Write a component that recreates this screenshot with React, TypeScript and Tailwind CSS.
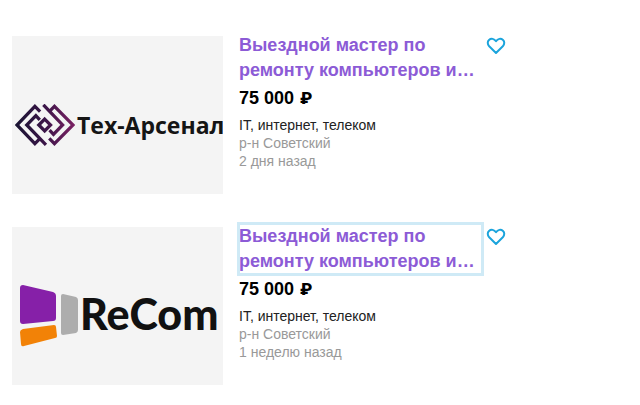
import { useState, type ReactNode } from "react";

function TechArsenalLogo() {
  return (
    <div className="flex h-full items-center pt-5 pl-[3px]">
      <svg viewBox="14 38 184 128" className="h-[42px] w-[60px] shrink-0" aria-hidden="true">
        <defs>
          <linearGradient id="arsenal" gradientUnits="userSpaceOnUse" x1="18" y1="102" x2="195" y2="102">
            <stop offset="0" stopColor="#1a1433" />
            <stop offset="0.5" stopColor="#3b1548" />
            <stop offset="1" stopColor="#7a2163" />
          </linearGradient>
        </defs>
        <g fill="none" stroke="url(#arsenal)" strokeWidth="10">
          <path d="M91 61 L75 45 L20 102 L75 159 L91 143" />
          <path d="M109 163 L50 102 L78 73 L90 86" />
          <path d="M101 40 L160 102 L132 131 L120 118" />
          <path d="M119 61 L135 45 L192 102 L135 159 L119 143" />
          <path d="M105 84 L123 102 L105 120 L87 102 Z" />
        </g>
      </svg>
      <span className="ml-[2px] font-['Open_Sans',sans-serif] text-[23px] leading-7 font-bold whitespace-nowrap text-[#151515]">
        Тех-Арсенал
      </span>
    </div>
  );
}

function ReComLogo() {
  return (
    <div className="flex h-full items-center pt-5 pl-2">
      <svg viewBox="0 0 58 62" className="h-[62px] w-[58px] shrink-0" aria-hidden="true">
        <path d="M3 0 L33 7 Q36 8 36 11 L36 33 Q36 36 33 36 L3 39 Q0 39 0 36 L0 3 Q0 0 3 0Z" fill="#8620a8" />
        <path d="M3 44 L34 40 Q36 40 36 42 L37 51 Q37 53 35 53 L4 61 Q1 62 1 59 L0 47 Q0 45 3 44Z" fill="#f28207" />
        <path d="M43 9 L56 12 Q58 13 58 15 L58 45 Q58 47 56 48 L43 50 Q41 50 41 48 L41 11 Q41 9 43 9Z" fill="#adadad" />
      </svg>
      <span className="ml-[2px] pb-1 font-[Lato,sans-serif] text-[43px] leading-10 font-black text-[#111]">ReCom</span>
    </div>
  );
}

function FavouriteButton() {
  const [active, setActive] = useState(false);
  return (
    <button type="button" aria-label="В избранное" aria-pressed={active} onClick={() => setActive(!active)} className="mt-[3px] h-5 w-5 shrink-0">
      <svg viewBox="0 0 20 20" className="h-5 w-5" fill={active ? "#1ba4dc" : "none"} stroke="#1ba4dc" strokeWidth="2" strokeLinejoin="round" aria-hidden="true">
        <path d="M10 17 L3.2 10.3 C1.2 8.2 1.4 5.3 3 3.9 C5.2 2 8.2 2.6 10 5.2 C11.8 2.6 14.8 2 17 3.9 C18.6 5.3 18.8 8.2 16.8 10.3 Z" />
      </svg>
    </button>
  );
}

type VacancyProps = { logo: ReactNode; posted: string; focused?: boolean };

function Vacancy({ logo, posted, focused = false }: VacancyProps) {
  return (
    <article className="flex items-start gap-4">
      <div className="mt-[3px] h-[158px] w-[211px] shrink-0 overflow-hidden bg-[#f4f4f4]">{logo}</div>
      <div className="min-w-0">
        <div className="flex items-start gap-1">
          <h2 className="w-[243px] text-lg leading-[25px] font-bold">
            <a
              href="#vacancy"
              className={
                focused
                  ? "block text-[#8c5bd6] outline-3 -outline-offset-1 outline-[#cfeaf6]"
                  : "block text-[#8c5bd6] -outline-offset-1 outline-[#cfeaf6] focus-visible:outline-3"
              }
            >
              Выездной мастер по ремонту компьютеров и…
            </a>
          </h2>
          <FavouriteButton />
        </div>
        <p className="mt-[3px] flex h-6 items-center gap-[6px] text-lg font-bold text-black">
          75 000 <span className="font-[Roboto,sans-serif] text-[17px] leading-6 font-black">₽</span>
        </p>
        <p className="mt-[6px] text-sm leading-[18px] text-[#222]">IT, интернет, телеком</p>
        <p className="text-sm leading-[18px] text-[#999]">р-н Советский</p>
        <p className="text-sm leading-[18px] text-[#999]">{posted}</p>
      </div>
    </article>
  );
}

export default function App() {
  return (
    <main className="flex min-h-screen flex-col gap-[30px] bg-white px-3 pt-[33px] font-['Liberation_Sans',Arial,sans-serif]">
      <Vacancy logo={<TechArsenalLogo />} posted="2 дня назад" />
      <Vacancy logo={<ReComLogo />} posted="1 неделю назад" focused />
    </main>
  );
}
